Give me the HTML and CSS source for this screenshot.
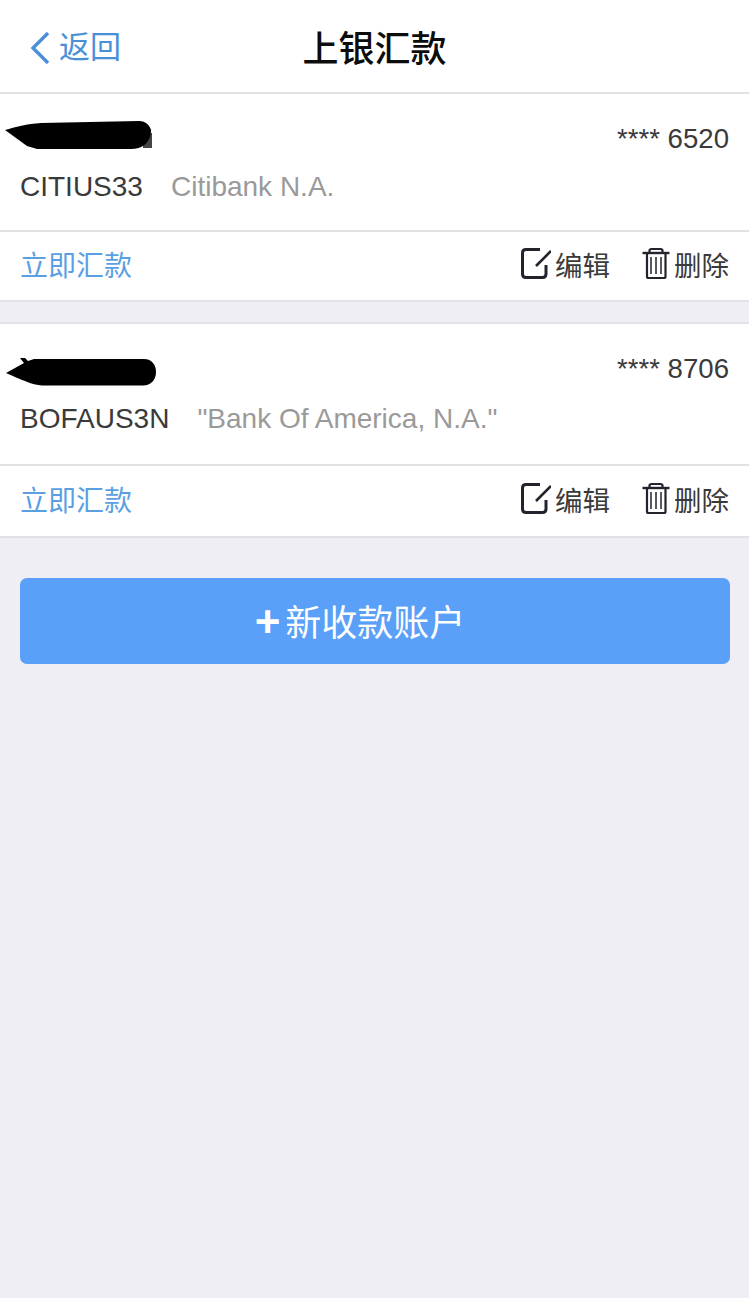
FILE: index.html
```html
<!DOCTYPE html>
<html lang="zh-CN">
<head>
<meta charset="utf-8">
<title>上银汇款</title>
<link rel="stylesheet" href="styles.css">
</head>
<body>
<header class="nav">
  <a class="back">
    <svg class="back-icon" width="20" height="34" viewBox="0 0 20 34"><path d="M18 2 L3 17 L18 32" fill="none" stroke="#4a90d9" stroke-width="3.4"/></svg>
    <span>返回</span>
  </a>
  <h1 class="title">上银汇款</h1>
</header>

<section class="card card-first">
  <div class="main main-first">
    <div class="line line-name">
      <span class="name"></span>
      <span class="acct">**** 6520</span>
    </div>
    <div class="line-bank"><span class="swift">CITIUS33</span><span class="bank">Citibank N.A.</span></div>
    <svg class="blot blot-a" width="150" height="32" viewBox="0 0 150 32"><path d="M138 12 L147 12 L147 27 L138 27 Z" fill="#444"/><path d="M0 9 C10 6 22 3 36 2 L134 0 C141 0 145 5 146 9 C146 17 142 24 135 26.500 C132 28 128 28 122 28 L32 28 L22 25 Z" fill="#000"/></svg>
  </div>
  <div class="actions actions-first">
    <a class="pay">立即汇款</a>
    <div class="tools">
      <a class="tool">
        <svg width="30" height="34" viewBox="0 0 30 34"><path d="M19 2.500 H5 Q1.500 2.500 1.500 6 V27 Q1.500 30.500 5 30.500 H21.500 Q25 30.500 25 27 V18" fill="none" stroke="#23232e" stroke-width="3"/><path d="M15 19 L30 4" fill="none" stroke="#23232e" stroke-width="2.600"/></svg>
        <span>编辑</span>
      </a>
      <a class="tool">
        <svg width="28" height="34" viewBox="0 0 28 34"><path d="M0.500 6 H27.500" fill="none" stroke="#23232e" stroke-width="2.400"/><path d="M7.500 5 V3.500 Q7.500 2 9.500 2 H18.500 Q20.500 2 20.500 3.500 V5 M5 6 V29.500 Q5 31 6.500 31 H22 Q23.500 31 23.500 29.500 V6" fill="none" stroke="#23232e" stroke-width="2.200"/><path d="M9 10 V27 M14 10 V27 M19 10 V27" fill="none" stroke="#23232e" stroke-width="1.500"/></svg>
        <span>删除</span>
      </a>
    </div>
  </div>
</section>

<section class="card card-second">
  <div class="main main-second">
    <div class="line line-name">
      <span class="name"></span>
      <span class="acct">**** 8706</span>
    </div>
    <div class="line-bank"><span class="swift">BOFAUS3N</span><span class="bank">"Bank Of America, N.A."</span></div>
    <svg class="blot blot-b" width="152" height="34" viewBox="0 0 152 34"><path d="M14 5 L19 5 L22 8 L28 6 L138 6 C146 6 150 12 150 19 C150 27 145 32.500 137 32.500 L36 32.500 C26 32 14 26 0 20 L18 10 Z" fill="#000"/></svg>
  </div>
  <div class="actions actions-second">
    <a class="pay">立即汇款</a>
    <div class="tools">
      <a class="tool">
        <svg width="30" height="34" viewBox="0 0 30 34"><path d="M19 2.500 H5 Q1.500 2.500 1.500 6 V27 Q1.500 30.500 5 30.500 H21.500 Q25 30.500 25 27 V18" fill="none" stroke="#23232e" stroke-width="3"/><path d="M15 19 L30 4" fill="none" stroke="#23232e" stroke-width="2.600"/></svg>
        <span>编辑</span>
      </a>
      <a class="tool">
        <svg width="28" height="34" viewBox="0 0 28 34"><path d="M0.500 6 H27.500" fill="none" stroke="#23232e" stroke-width="2.400"/><path d="M7.500 5 V3.500 Q7.500 2 9.500 2 H18.500 Q20.500 2 20.500 3.500 V5 M5 6 V29.500 Q5 31 6.500 31 H22 Q23.500 31 23.500 29.500 V6" fill="none" stroke="#23232e" stroke-width="2.200"/><path d="M9 10 V27 M14 10 V27 M19 10 V27" fill="none" stroke="#23232e" stroke-width="1.500"/></svg>
        <span>删除</span>
      </a>
    </div>
  </div>
</section>

<button class="add" type="button"><span class="plus">+</span>新收款账户</button>
</body>
</html>
```

FILE: styles.css
```css
* { box-sizing: border-box; }

html, body { height: 100%; }

body {
  margin: 0;
  background: #eeeef4;
  font-family: "Liberation Sans", "Noto Sans CJK SC", sans-serif;
  color: #3a3a3a;
}

.nav {
  position: relative;
  height: 94px;
  background: #fff;
  border-bottom: 2px solid #e2e2e6;
  display: flex;
  align-items: center;
  justify-content: center;
}

.back {
  position: absolute;
  left: 30px;
  top: 31px;
  display: flex;
  align-items: center;
  gap: 9px;
  color: #4a90d9;
  font-size: 31px;
  line-height: 34px;
}

.back-icon { display: block; }

.title {
  margin: 0;
  font-size: 36px;
  font-weight: 500;
  line-height: 40px;
  color: #0c0c0c;
  padding-top: 7px;
}

.card {
  background: #fff;
  border-bottom: 2px solid #e2e2e6;
}

.card-second {
  margin-top: 20px;
  border-top: 2px solid #e2e2e6;
}

.main {
  position: relative;
  padding: 0 20px;
  border-bottom: 2px solid #e2e2e6;
}

.main-first { height: 138px; padding-top: 28px; }
.main-second { height: 142px; padding-top: 28px; }

.line-name {
  display: flex;
  justify-content: space-between;
  height: 34px;
  line-height: 34px;
}

.acct { font-size: 27.600px; color: #3a3a3a; }

.line-bank {
  display: flex;
  align-items: center;
  margin-top: 14px;
  font-size: 28px;
  line-height: 34px;
}

.main-second .line-bank { margin-top: 16px; }

.swift { color: #3a3a3a; }

.bank { color: #9a9a9a; margin-left: 28px; }

.blot { position: absolute; display: block; }
.blot-a { left: 5px; top: 27px; }
.blot-b { left: 6px; top: 29px; }

.actions {
  display: flex;
  align-items: center;
  justify-content: space-between;
  padding: 0 20px;
}

.actions-first { height: 68px; }
.actions-second { height: 70px; }

.pay {
  color: #5b9fe3;
  font-size: 28px;
  line-height: 34px;
  padding-top: 2px;
}

.tools {
  display: flex;
  align-items: center;
  gap: 32px;
}

.tool {
  display: flex;
  align-items: center;
  gap: 4px;
  font-size: 27.500px;
  line-height: 34px;
  color: #3a3a3a;
}

.tool span { padding-top: 2px; }

.tool svg {
  display: block;
  margin-bottom: 4px;
}

.add {
  display: flex;
  align-items: center;
  justify-content: center;
  width: 710px;
  height: 86px;
  margin: 40px 0 0 20px;
  padding: 0 30px 3px 0;
  border: 0;
  border-radius: 7px;
  background: #5aa0f8;
  color: #fff;
  font: inherit;
  font-size: 36px;
}

.plus {
  font-size: 44px;
  line-height: 44px;
  font-weight: 700;
  margin: 4px 5px 0 0;
}
```
